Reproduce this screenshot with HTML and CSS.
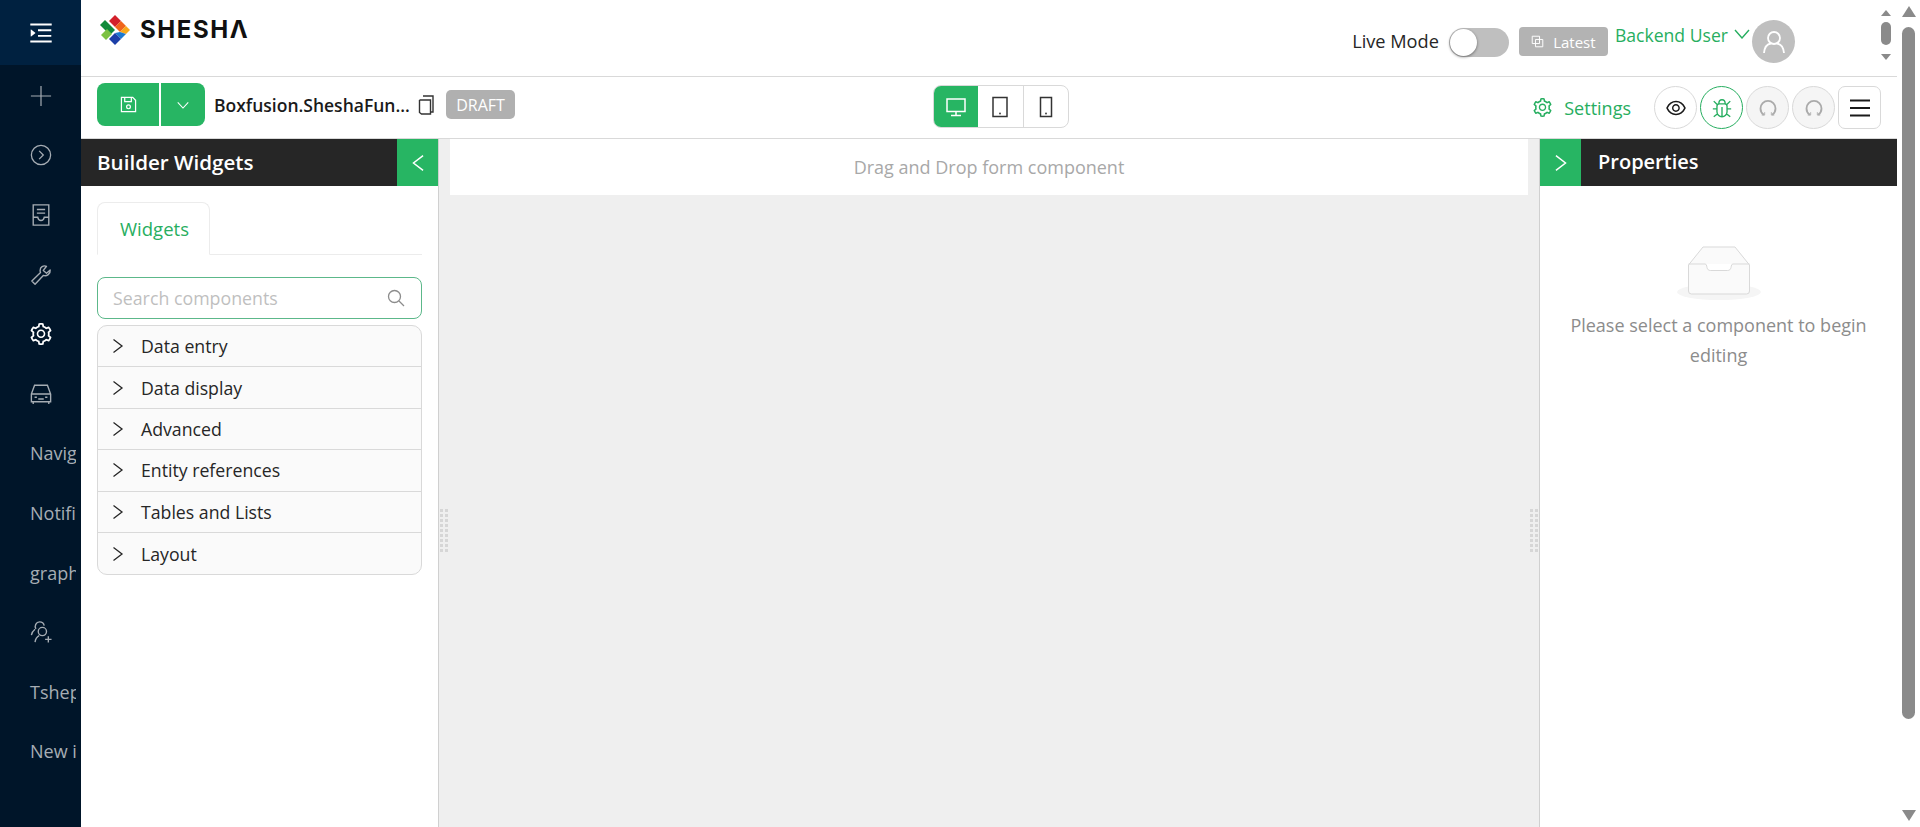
FILE: index.html
```html
<!DOCTYPE html>
<html lang="en">
<head>
<meta charset="utf-8">
<title>Shesha Form Designer</title>
<link rel="stylesheet" href="styles.css">
</head>
<body>
<svg class="defs" width="0" height="0" aria-hidden="true">
  <symbol id="i-gear" viewBox="64 64 896 896"><path fill="currentColor" d="M924.8 625.7l-65.5-56c3.1-19 4.7-38.4 4.7-57.8s-1.6-38.8-4.7-57.8l65.5-56a32.03 32.03 0 009.3-35.2l-.9-2.6a443.74 443.74 0 00-79.7-137.9l-1.8-2.1a32.12 32.12 0 00-35.1-9.5l-81.3 28.9c-30-24.6-63.5-44-99.7-57.6l-15.7-85a32.05 32.05 0 00-25.8-25.7l-2.7-.5c-52.1-9.4-106.9-9.4-159 0l-2.7.5a32.05 32.05 0 00-25.8 25.7l-15.8 85.4a351.86 351.86 0 00-99 57.4l-81.9-29.1a32 32 0 00-35.1 9.5l-1.8 2.1a446.02 446.02 0 00-79.7 137.9l-.9 2.6c-4.5 12.5-.8 26.5 9.3 35.2l66.3 56.6c-3.1 18.8-4.6 38-4.6 57.1 0 19.2 1.5 38.4 4.6 57.1L99 625.5a32.03 32.03 0 00-9.3 35.2l.9 2.6c18.1 50.4 44.9 96.9 79.7 137.9l1.8 2.1a32.12 32.12 0 0035.1 9.5l81.9-29.1c29.8 24.5 63.1 43.9 99 57.4l15.8 85.4a32.05 32.05 0 0025.8 25.7l2.7.5a449.4 449.4 0 00159 0l2.7-.5a32.05 32.05 0 0025.8-25.7l15.7-85a350 350 0 0099.7-57.6l81.3 28.9a32 32 0 0035.1-9.5l1.8-2.1c34.8-41.1 61.6-87.5 79.7-137.9l.9-2.6c4.5-12.3.8-26.3-9.3-35zM788.3 465.9c2.5 15.1 3.8 30.6 3.8 46.1s-1.3 31-3.8 46.1l-6.6 40.1 74.7 63.9a370.03 370.03 0 01-42.6 73.6L721 702.8l-31.4 25.8c-23.9 19.6-50.5 35-79.3 45.8l-38.1 14.3-17.9 97a377.5 377.5 0 01-85 0l-17.9-97.2-37.8-14.5c-28.5-10.8-55-26.2-78.7-45.7l-31.4-25.9-93.4 33.2c-17-22.9-31.2-47.6-42.6-73.6l75.5-64.5-6.5-40c-2.4-14.9-3.7-30.3-3.7-45.5 0-15.3 1.2-30.6 3.7-45.5l6.5-40-75.5-64.5c11.3-26.1 25.6-50.7 42.6-73.6l93.4 33.2 31.4-25.9c23.7-19.5 50.2-34.9 78.7-45.7l37.9-14.3 17.9-97.2c28.1-3.2 56.8-3.2 85 0l17.9 97 38.1 14.3c28.7 10.8 55.4 26.2 79.3 45.8l31.4 25.8 92.8-32.9c17 22.9 31.2 47.6 42.6 73.6L781.8 426l6.5 39.9zM512 326c-97.2 0-176 78.8-176 176s78.8 176 176 176 176-78.8 176-176-78.8-176-176-176zm79.2 255.2A111.6 111.6 0 01512 614c-29.9 0-58-11.7-79.2-32.8A111.6 111.6 0 01400 502c0-29.9 11.7-58 32.8-79.2C454 401.6 482.1 390 512 390c29.9 0 58 11.6 79.2 32.8A111.6 111.6 0 01624 502c0 29.9-11.7 58-32.8 79.2z"/></symbol>
  <symbol id="i-chev" viewBox="0 0 16 16"><path d="M3.500 1.500L12 8l-8.500 6.500" fill="none" stroke="currentColor" stroke-width="1.300"/></symbol>
  <symbol id="i-undo" viewBox="0 0 24 24"><path d="M7 20C4 18 3 15.500 3 12.500a9 9 0 0118 0c0 3-1 5.500-4 7.500" fill="none" stroke="currentColor" stroke-width="2.200"/><path d="M4.500 20.500H8V17M19.500 20.500H16V17" fill="none" stroke="currentColor" stroke-width="1"/></symbol>
</svg>

<aside class="sider">
  <div class="sider-trigger">
    <svg class="ic-24" viewBox="64 64 896 896"><path fill="currentColor" d="M408 442h480c4.400 0 8-3.600 8-8v-56c0-4.400-3.600-8-8-8H408c-4.400 0-8 3.600-8 8v56c0 4.400 3.600 8 8 8zm-8 204c0 4.400 3.600 8 8 8h480c4.400 0 8-3.600 8-8v-56c0-4.400-3.600-8-8-8H408c-4.400 0-8 3.600-8 8v56zm504-486H120c-4.400 0-8 3.600-8 8v56c0 4.400 3.600 8 8 8h784c4.400 0 8-3.600 8-8v-56c0-4.400-3.600-8-8-8zm0 632H120c-4.400 0-8 3.600-8 8v56c0 4.400 3.600 8 8 8h784c4.400 0 8-3.600 8-8v-56c0-4.400-3.600-8-8-8zM142.400 642.100L298.700 519a8.840 8.840 0 000-13.900L142.400 381.900c-5.800-4.600-14.400-.5-14.400 6.900v246.300a8.900 8.900 0 0014.400 7z"/></svg>
  </div>
  <nav class="sider-menu">
    <div class="menu-item"><svg class="ic-22" viewBox="0 0 24 24"><path d="M12 1v22M1 12h22" fill="none" stroke="currentColor" stroke-width="1.300"/></svg></div>
    <div class="menu-item"><svg class="ic-22" viewBox="0 0 24 24"><circle cx="12" cy="12" r="10.500" fill="none" stroke="currentColor" stroke-width="1.400"/><path d="M10 7.500l4.500 4.500-4.500 4.500" fill="none" stroke="currentColor" stroke-width="1.400"/></svg></div>
    <div class="menu-item"><svg class="ic-22" viewBox="0 0 24 24"><path d="M3.500 1h17v22h-17zM3.500 14.500h5c.5 2.500 1.500 3.500 3.500 3.500s3-1 3.500-3.500h5M7.500 6h9M7.500 10h9" fill="none" stroke="currentColor" stroke-width="1.500"/></svg></div>
    <div class="menu-item"><svg class="ic-22" viewBox="0 0 24 24"><path d="M22 6.500l-4 3.500-3.500-3L18 2.500C14.500 1 11 3.500 11 7c0 1 .2 1.700.5 2.300L2 18.500l3.500 3.500 9-9.500c3.800 1.200 8-1.500 7.500-6z" fill="none" stroke="currentColor" stroke-width="1.500" stroke-linejoin="round"/></svg></div>
    <div class="menu-item menu-active"><svg class="ic-22"><use href="#i-gear"/></svg></div>
    <div class="menu-item"><svg class="ic-22" viewBox="0 0 24 24"><path d="M1.500 12L5 2.500h14L22.500 12v8.500h-21zM1.500 12h21M3.500 20.500v2.500M20.500 20.500v2.500M5 15.500h2.500M16.500 15.500H19M9 17.500h6" fill="none" stroke="currentColor" stroke-width="1.500"/></svg></div>
    <div class="menu-item"><span class="menu-text">Navigation</span></div>
    <div class="menu-item"><span class="menu-text">Notifications</span></div>
    <div class="menu-item"><span class="menu-text">graphs</span></div>
    <div class="menu-item"><svg class="ic-22" viewBox="0 0 24 24"><path d="M6.500 8.500C4.500 5.500 6.500 1 10.500 1c2.500 0 4.500 1.800 5 4M1.500 15.500c.5-2.500 2-5 4-6.500M5.500 23c.5-3.500 2.500-6 4.500-7" fill="none" stroke="currentColor" stroke-width="1.500"/><circle cx="13.500" cy="11.500" r="4.500" fill="none" stroke="currentColor" stroke-width="1.500"/><path d="M16.500 20h7M20 16.500v7" fill="none" stroke="currentColor" stroke-width="1.500"/></svg></div>
    <div class="menu-item"><span class="menu-text">Tshepo</span></div>
    <div class="menu-item"><span class="menu-text">New item</span></div>
  </nav>
</aside>

<div class="main">
  <header class="topbar">
    <div class="logo">
      <svg class="logo-mark" viewBox="0 0 30 30">
        <polygon points="15,0 21,6 15,12 9,6" fill="#d3202a"/>
        <polygon points="21,6 26,11 20,17 15,12" fill="#f0651c"/>
        <polygon points="26,11 30,15 26,19 20,17" fill="#f7a81b"/>
        <polygon points="20,17 26,19 21,24 15,18" fill="#1b78d0"/>
        <polygon points="15,18 21,24 15,30 9,24" fill="#1c3fa8"/>
        <polygon points="0,10 5,5 15,15 10,20" fill="#128a3a"/>
        <polygon points="1,20 7,14 12,19 6,25" fill="#7cc142"/>
      </svg>
      <span class="logo-text">SHESHΛ</span>
    </div>
    <div class="top-right">
      <span class="live-label">Live Mode</span>
      <span class="switch"><span class="switch-knob"></span></span>
      <span class="latest">
        <svg class="ic-13" viewBox="0 0 16 16"><path d="M1.500 1.500h9v9h-9zM5.500 5.500h9v9h-9z" fill="none" stroke="currentColor" stroke-width="1.200"/></svg>
        Latest
      </span>
      <span class="user-name">Backend User</span>
      <svg class="user-chev" viewBox="0 0 16 10"><path d="M1 1l7 8 7-8" fill="none" stroke="currentColor" stroke-width="1.400"/></svg>
      <span class="avatar">
        <svg class="ic-24" viewBox="0 0 24 24"><circle cx="12" cy="8" r="6" fill="none" stroke="currentColor" stroke-width="1.800"/><path d="M2 23c.5-5.500 3.500-9 7-9.500M22 23c-.5-5.500-3.500-9-7-9.500" fill="none" stroke="currentColor" stroke-width="1.800"/></svg>
      </span>
    </div>
    <div class="mini-scroll">
      <span class="arrow-up"></span>
      <span class="mini-thumb"></span>
      <span class="arrow-down"></span>
    </div>
  </header>

  <div class="toolbar">
    <div class="title-group">
      <div class="save-group">
        <button class="save-btn save-main">
          <svg class="ic-17" viewBox="0 0 18 18"><path d="M1.500 1.500h12l3 3v12h-15zM5 1.500v4.500h7V1.500" fill="none" stroke="currentColor" stroke-width="1.300"/><circle cx="9" cy="11.500" r="2" fill="none" stroke="currentColor" stroke-width="1.300"/></svg>
        </button>
        <button class="save-btn save-more">
          <svg class="ic-14" viewBox="0 0 16 16"><path d="M2 5l6 6.500L14 5" fill="none" stroke="currentColor" stroke-width="1.200"/></svg>
        </button>
      </div>
      <span class="form-name">Boxfusion.SheshaFun...</span>
      <svg class="copy-ic" viewBox="0 0 16 20"><path d="M5 1h10v16h-2.500M1.500 5v12.500l2 1.500h9V5h-11" fill="none" stroke="currentColor" stroke-width="1.400"/></svg>
      <span class="draft">DRAFT</span>
    </div>

    <div class="devices">
      <span class="device device-on"><svg class="ic-22" viewBox="0 0 22 22"><path d="M2 3h18v12.500H2zM11 15.500v3.500M6 19.500h10" fill="none" stroke="currentColor" stroke-width="1.500"/></svg></span>
      <span class="device"><svg class="ic-22" viewBox="0 0 22 22"><path d="M4 1.500h14v19H4z" fill="none" stroke="currentColor" stroke-width="1.500"/><circle cx="11" cy="17.500" r=".9" fill="currentColor"/></svg></span>
      <span class="device"><svg class="ic-22" viewBox="0 0 22 22"><path d="M5.500 1.500h11v19h-11z" fill="none" stroke="currentColor" stroke-width="1.500"/><circle cx="11" cy="17.500" r=".9" fill="currentColor"/></svg></span>
    </div>

    <span class="settings"><svg class="ic-19"><use href="#i-gear"/></svg>Settings</span>
    <div class="actions">
      <span class="round"><svg class="ic-20" viewBox="64 64 896 896"><path fill="currentColor" d="M942.200 486.200C847.400 286.500 704.100 186 512 186c-192.200 0-335.400 100.500-430.200 300.300a60.300 60.300 0 000 51.500C176.600 737.500 319.900 838 512 838c192.200 0 335.400-100.500 430.200-300.300 7.700-16.200 7.700-35 0-51.500zM512 766c-161.300 0-279.400-81.800-362.700-254C232.600 339.800 350.700 258 512 258c161.300 0 279.400 81.800 362.700 254C791.500 684.200 673.400 766 512 766zm-4-430c-97.200 0-176 78.800-176 176s78.800 176 176 176 176-78.800 176-176-78.800-176-176-176zm0 288c-61.900 0-112-50.100-112-112s50.100-112 112-112 112 50.100 112 112-50.100 112-112 112z"/></svg></span>
      <span class="round round-on"><svg class="ic-22" viewBox="0 0 24 24"><path d="M6.500 10c0-1.200 1-2.500 2.500-2.500h6c1.500 0 2.500 1.300 2.500 2.500v6a5.500 5.500 0 01-11 0zM8.500 7.500C8.500 4.500 10 3 12 3s3.500 1.500 3.500 4.500M12 11v10.500M2 13h4.500M17.500 13H22M3 4.500l4 4M21 4.500l-4 4M3 21.500l4.500-3.500M21 21.500L16.500 18" fill="none" stroke="currentColor" stroke-width="1.500"/></svg></span>
      <span class="round round-off"><svg class="ic-20"><use href="#i-undo"/></svg></span>
      <span class="round round-off"><svg class="ic-20"><use href="#i-undo"/></svg></span>
      <span class="menu-box"><svg class="ic-22" viewBox="0 0 22 22"><path d="M1 3.500h20M1 11h20M1 18.500h20" fill="none" stroke="currentColor" stroke-width="1.800"/></svg></span>
    </div>
  </div>

  <div class="workspace">
    <section class="panel panel-left">
      <div class="panel-head">
        <h2 class="panel-title panel-title-l">Builder Widgets</h2>
        <span class="panel-toggle"><svg class="ic-18 flip"><use href="#i-chev"/></svg></span>
      </div>
      <div class="panel-body">
        <div class="tabs"><span class="tab">Widgets</span></div>
        <div class="search">
          <span class="search-text">Search components</span>
          <svg class="ic-18" viewBox="0 0 18 18"><circle cx="7.500" cy="7.500" r="6" fill="none" stroke="currentColor" stroke-width="1.300"/><path d="M12 12l5 5" fill="none" stroke="currentColor" stroke-width="1.300"/></svg>
        </div>
        <div class="collapse">
          <div class="row"><svg class="ic-16"><use href="#i-chev"/></svg>Data entry</div>
          <div class="row"><svg class="ic-16"><use href="#i-chev"/></svg>Data display</div>
          <div class="row"><svg class="ic-16"><use href="#i-chev"/></svg>Advanced</div>
          <div class="row"><svg class="ic-16"><use href="#i-chev"/></svg>Entity references</div>
          <div class="row"><svg class="ic-16"><use href="#i-chev"/></svg>Tables and Lists</div>
          <div class="row"><svg class="ic-16"><use href="#i-chev"/></svg>Layout</div>
        </div>
      </div>
    </section>

    <section class="canvas">
      <div class="drop-hint">Drag and Drop form component</div>
      <span class="grip grip-l"></span>
      <span class="grip grip-r"></span>
    </section>

    <section class="panel panel-right">
      <div class="panel-head">
        <span class="panel-toggle"><svg class="ic-18"><use href="#i-chev"/></svg></span>
        <h2 class="panel-title panel-title-r">Properties</h2>
      </div>
      <div class="empty">
        <svg class="empty-img" viewBox="0 0 86 54">
          <ellipse cx="43" cy="46" rx="42" ry="8" fill="#f5f5f5"/>
          <path d="M12.500 19L27 1h32l14.500 18v26a3 3 0 01-3 3h-55a3 3 0 01-3-3z" fill="#fafafa" stroke="#d9d9d9" stroke-width="1"/>
          <path d="M12.500 18H29c1.500 0 1.500 1.500 2 3.500s1.500 3 3.500 3h17c2 0 3-1 3.500-3s.5-3.500 2-3.500h16.500" fill="#fff" stroke="#d9d9d9" stroke-width="1"/>
        </svg>
        <p class="empty-text">Please select a component to begin editing</p>
      </div>
    </section>
  </div>
</div>

<div class="page-scroll">
  <span class="arrow-up big"></span>
  <span class="page-thumb"></span>
  <span class="arrow-down big"></span>
</div>
</body>
</html>
```

FILE: styles.css
```css
* { box-sizing: border-box; }
html, body { height: 100%; }
body {
  margin: 0;
  display: flex;
  height: 827px;
  overflow: hidden;
  background: #fff;
  font-family: "Open Sans", "Noto Sans", sans-serif;
  font-size: 18px;
  color: #262626;
}
.defs { position: absolute; }
svg { display: block; flex: none; }
.ic-13 { width: 13px; height: 13px; }
.ic-14 { width: 14px; height: 14px; }
.ic-16 { width: 16px; height: 16px; }
.ic-17 { width: 17px; height: 17px; }
.ic-18 { width: 18px; height: 18px; }
.ic-19 { width: 19px; height: 19px; }
.ic-20 { width: 20px; height: 20px; }
.ic-22 { width: 22px; height: 22px; }
.ic-24 { width: 24px; height: 24px; }
.flip { transform: scaleX(-1); }

/* sider */
.sider { width: 81px; flex: none; background: #001529; color: #a6adb4; overflow: hidden; }
.sider-trigger {
  height: 65px; background: #002140; color: #fff;
  display: flex; align-items: center; justify-content: center;
}
.sider-menu { display: flex; flex-direction: column; padding-top: 1px; }
.menu-item {
  height: 59.600px; padding-left: 30px; width: 76px; overflow: hidden;
  display: flex; align-items: center; white-space: nowrap; font-size: 18px;
}
.menu-active { color: #fff; }
.menu-text { display: block; }

/* main */
.main { width: 1816px; flex: none; display: flex; flex-direction: column; min-width: 0; }
.topbar {
  height: 77px; flex: none; border-bottom: 1px solid #d9d9d9;
  display: flex; align-items: flex-start; padding: 0 6px 0 19px;
}
.logo { display: flex; align-items: center; gap: 10px; padding-top: 15px; }
.logo-mark { width: 30px; height: 30px; }
.logo-text { font-family: "Inter", sans-serif; font-weight: 700; font-size: 24px; letter-spacing: 1.600px; color: #111; line-height: 30px; }
.top-right { margin-left: auto; display: flex; align-items: flex-start; padding-top: 20px; }
.live-label { font-size: 18.200px; color: #262626; margin-top: 9px; line-height: 24px; }
.switch {
  width: 60px; height: 29px; border-radius: 15px; background: #bfbfbf; margin: 8px 10px 0 10px;
  padding: 1px; display: block;
}
.switch-knob { display: block; width: 27px; height: 27px; border-radius: 50%; background: #fff; box-shadow: 0 1px 3px rgba(0,0,0,.45); }
.latest {
  width: 89px; height: 29px; border-radius: 4px; background: #b3b3b3; color: #fff; margin-top: 7px;
  display: flex; align-items: center; justify-content: center; gap: 9px; font-size: 15px;
}
.user-name { color: #27ae60; font-size: 17.600px; line-height: 30px; margin: 0 6px 0 7px; }
.user-chev { width: 16px; height: 10px; color: #27ae60; margin: 9px 2px 0 0; }
.avatar {
  width: 43px; height: 43px; border-radius: 50%; background: #bfbfbf; color: #fff;
  display: flex; align-items: center; justify-content: center;
}
.mini-scroll { width: 10px; margin-left: 86px; padding-top: 10px; display: flex; flex-direction: column; align-items: center; }
.arrow-up, .arrow-down { width: 0; height: 0; border-left: 5px solid transparent; border-right: 5px solid transparent; display: block; }
.arrow-up { border-bottom: 6px solid #8a8a8a; }
.arrow-down { border-top: 6px solid #8a8a8a; }
.mini-thumb { width: 10px; height: 23px; border-radius: 5px; background: #8a8a8a; margin: 6px 0 9px; }

/* toolbar */
.toolbar { height: 62px; flex: none; border-bottom: 1px solid #d9d9d9; display: flex; align-items: center; padding: 0 16px 0 16px; }
.title-group { display: flex; align-items: center; height: 43px; margin-top: -6px; }
.save-group { display: flex; height: 43px; }
.save-btn { border: 0; padding: 0; background: #27b563; color: #fff; height: 43px; display: flex; align-items: center; justify-content: center; }
.save-main { width: 63px; border-radius: 8px 0 0 8px; border-right: 1px solid #fff; }
.save-more { width: 44px; border-radius: 0 8px 8px 0; margin-left: 1px; }
.form-name { margin-left: 9px; font-size: 17.500px; font-weight: 600; color: #1a1a1a; width: 197px; white-space: nowrap; }
.copy-ic { width: 16px; height: 20px; color: #333; margin-left: 7px; }
.draft { margin-left: 12px; width: 69px; height: 29px; border-radius: 5px; background: #b0b0b0; color: #fff; font-size: 16px; display: flex; align-items: center; justify-content: center; }
.devices { margin-left: 418px; margin-top: -2px; width: 136px; height: 43px; display: flex; border: 1px solid #d9d9d9; border-radius: 8px; overflow: hidden; }
.device { flex: 1; display: flex; align-items: center; justify-content: center; color: #333; border-left: 1px solid #d9d9d9; }
.device-on { background: #27b563; color: #fff; border-left: 0; }
.device-on + .device { border-left: 0; }
.settings { margin-left: auto; color: #27ae60; display: flex; align-items: center; gap: 12px; font-size: 18px; }
.actions { display: flex; gap: 3px; margin-left: 23px; align-items: center; }
.round { width: 43px; height: 43px; border-radius: 50%; border: 1px solid #d9d9d9; display: flex; align-items: center; justify-content: center; color: #1a1a1a; }
.round-on { border-color: #27ae60; color: #27ae60; }
.round-off { background: #f5f5f5; color: #aaa; }
.menu-box { width: 43px; height: 43px; border-radius: 7px; border: 1px solid #d9d9d9; display: flex; align-items: center; justify-content: center; color: #1a1a1a; }

/* workspace */
.workspace { flex: 1; display: flex; min-height: 0; }
.panel { width: 358px; flex: none; display: flex; flex-direction: column; background: #fff; }
.panel-left { border-right: 1px solid #d0d0d0; }
.panel-right { border-left: 1px solid #d0d0d0; }
.panel-head { height: 47px; flex: none; background: #262626; color: #fff; display: flex; align-items: stretch; }
.panel-title { margin: 0; flex: 1; font-size: 20px; font-weight: 600; line-height: 46px; padding-left: 16px; }
.panel-title-l { font-size: 20.600px; }
.panel-title-r { padding-left: 17px; }
.panel-toggle { width: 41px; background: #27b563; display: flex; align-items: center; justify-content: center; }
.panel-body { padding: 16px 16px 0; }
.tabs { height: 53px; border-bottom: 1px solid #ececec; display: flex; }
.tab { width: 113px; height: 53px; border: 1px solid #ececec; border-bottom-color: #fff; border-radius: 8px 8px 0 0; color: #27ae60; font-size: 18.500px; padding-left: 2px; display: flex; align-items: center; justify-content: center; }
.search {
  margin-top: 22px; height: 42px; border: 1px solid #5cb88a; border-radius: 8px;
  display: flex; align-items: center; justify-content: space-between; padding: 0 16px 0 15px; color: #8c8c8c;
}
.search-text { color: #bfbfbf; font-size: 17.800px; }
.collapse { margin-top: 6px; border: 1px solid #d9d9d9; border-radius: 10px; overflow: hidden; background: #fafafa; }
.row { height: 41.400px; display: flex; align-items: center; gap: 15px; padding-left: 12px; color: #262626; font-size: 17.700px; border-bottom: 1px solid #d9d9d9; }
.row:last-child { border-bottom: 0; }

/* canvas */
.canvas { flex: 1; background: #efefef; padding: 0 11px; position: relative; min-width: 0; }
.drop-hint { height: 56px; background: #fff; color: #a8a8a8; display: flex; align-items: center; justify-content: center; font-size: 18px; }
.grip {
  position: absolute; top: 370px; width: 8px; height: 43px;
  background: repeating-linear-gradient(180deg, #d6d6d6 0 3px, #efefef 3px 5px);
}
.grip::after {
  content: ""; display: block; width: 2px; height: 100%; margin-left: 3px; background: #efefef;
}
.grip-l { left: 1px; }
.grip-r { right: 1px; }

.empty { display: flex; flex-direction: column; align-items: center; padding: 60px 20px 0; }
.empty-img { width: 86px; height: 54px; }
.empty-text { margin: 10px 0 0; color: #8c8c8c; text-align: center; line-height: 30px; font-size: 18px; }

/* page scrollbar */
.page-scroll { width: 23px; flex: none; display: flex; flex-direction: column; align-items: center; padding: 6px 5px 6px 5px; }
.arrow-up.big { border-left-width: 7px; border-right-width: 7px; border-bottom-width: 11px; }
.arrow-down.big { border-left-width: 7px; border-right-width: 7px; border-top-width: 11px; margin-top: auto; }
.page-thumb { width: 13px; height: 692px; border-radius: 7px; background: #8a8a8a; margin-top: 10px; }
```
